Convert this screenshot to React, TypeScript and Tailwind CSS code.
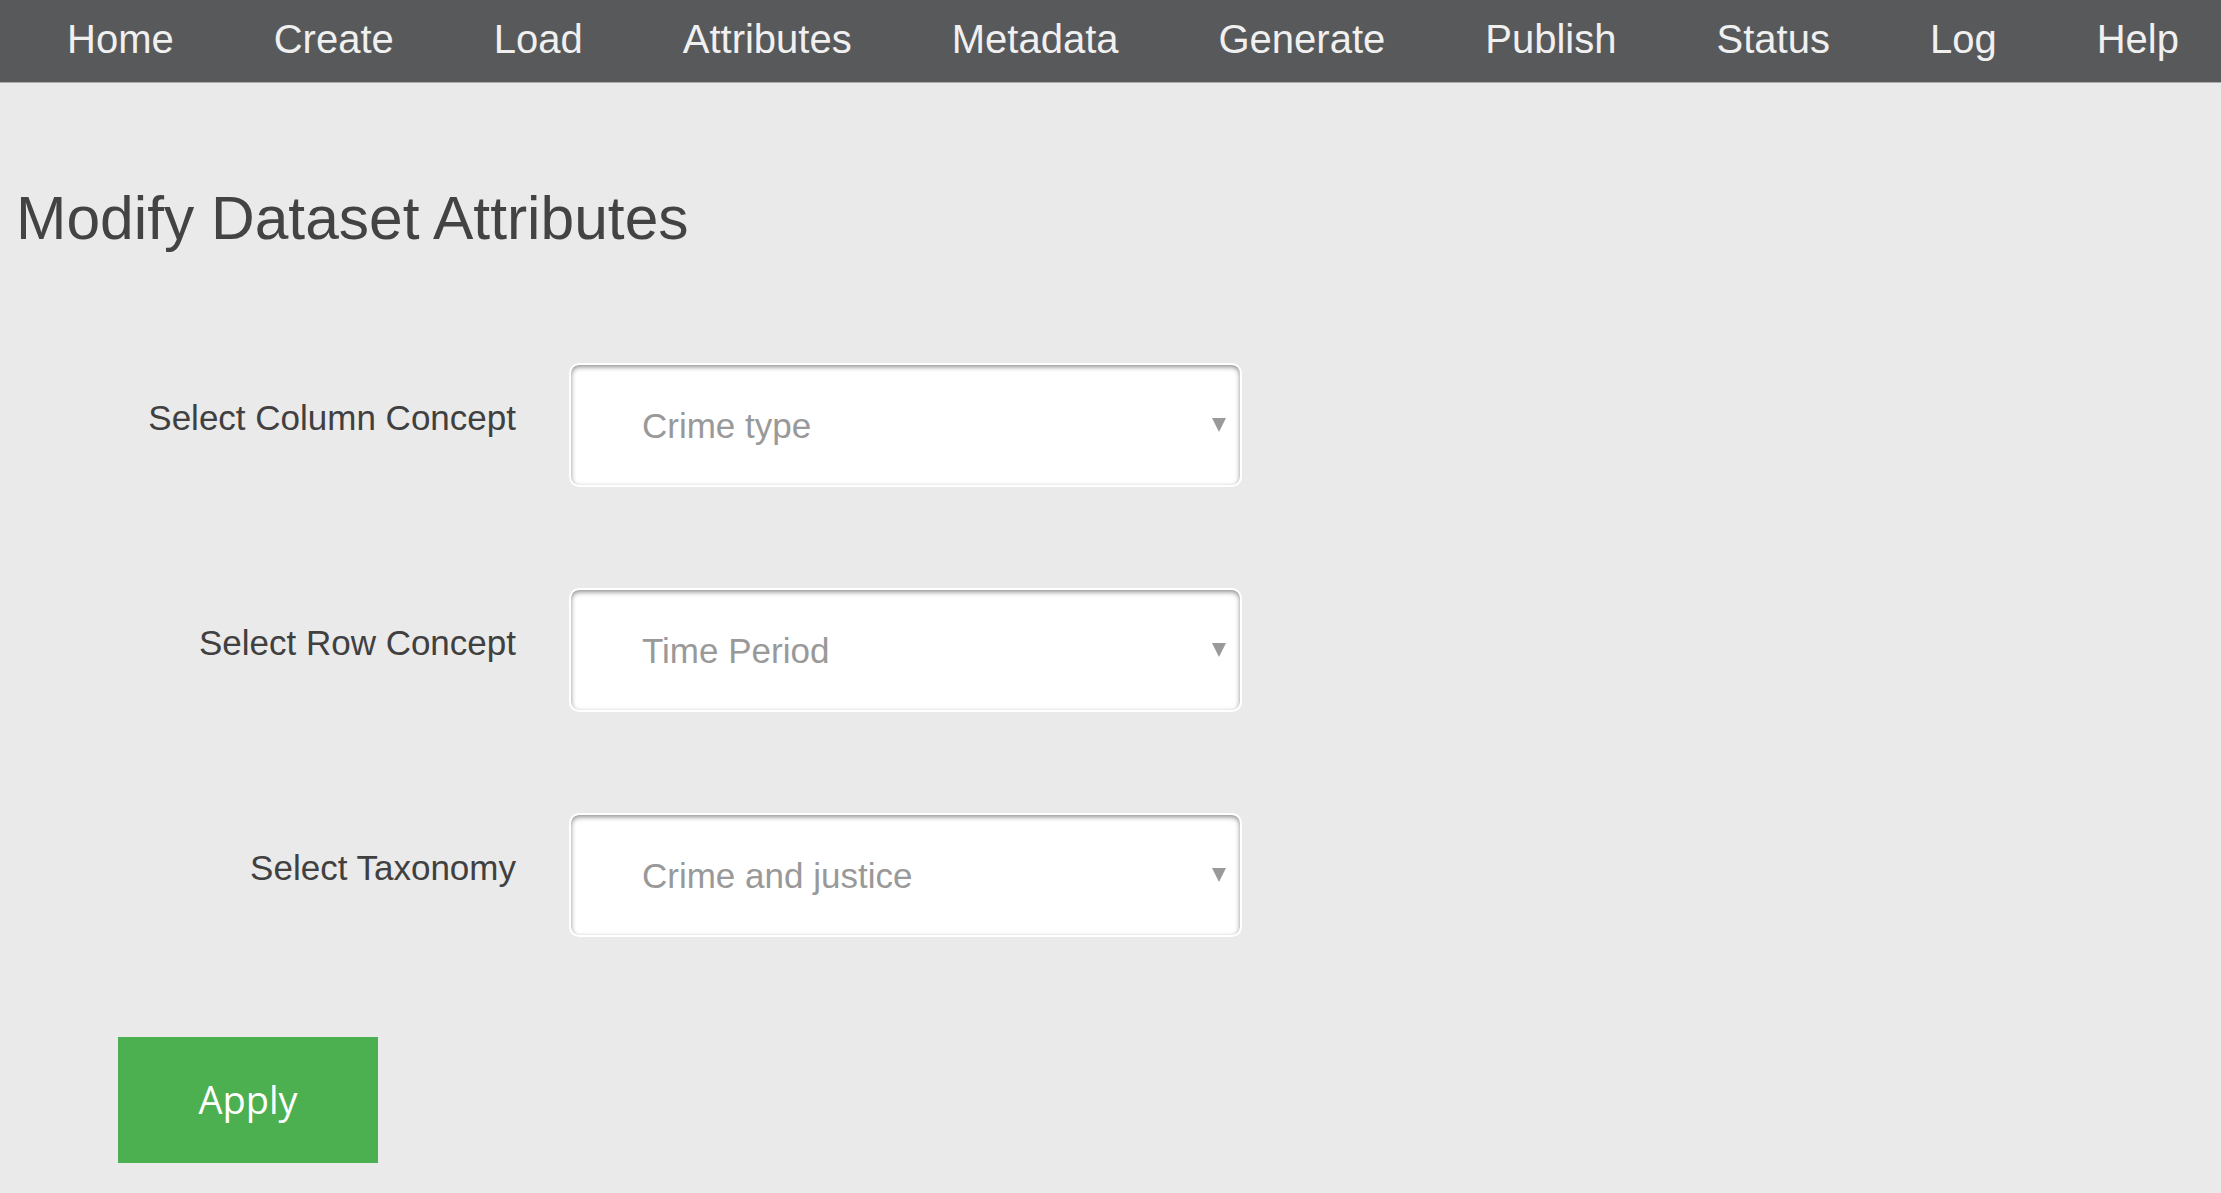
import React from "react";

const navItems = ["Home", "Create", "Load", "Attributes", "Metadata", "Generate", "Publish", "Status", "Log", "Help"];

const rows = [
  { label: "Select Column Concept", value: "Crime type" },
  { label: "Select Row Concept", value: "Time Period" },
  { label: "Select Taxonomy", value: "Crime and justice" },
];

function SelectBox({ value }: { value: string }) {
  return (
    <div className="relative flex h-[124px] w-[673px] items-center rounded-[10px] border-2 border-white bg-white shadow-[inset_0_2px_5px_rgba(0,0,0,0.45)]">
      <span className="pl-[71px] text-[35px] leading-[35px] text-[#999999]">{value}</span>
      <svg
        className="absolute right-[14px] top-1/2 -translate-y-1/2"
        width="14"
        height="14"
        viewBox="0 0 14 14"
      >
        <polygon points="0,0 14,0 7,14" fill="#9a9a9a" />
      </svg>
    </div>
  );
}

export default function App() {
  return (
    <div
      className="min-h-screen w-full bg-[#eaeaea]"
      style={{ fontFamily: '"Liberation Sans", Arial, sans-serif' }}
    >
      <nav className="flex h-[83px] items-start gap-[100px] border-b border-[#aeaeae] bg-[#58595b] pl-[67px] pt-[19px]">
        {navItems.map((item) => (
          <a key={item} className="text-[40px] leading-[40px] text-[#f0f0f0]">
            {item}
          </a>
        ))}
      </nav>

      <main className="pl-[16px]">
        <h1 className="mt-[102px] text-[60.5px] font-normal leading-[66px] text-[#434343]">
          Modify Dataset Attributes
        </h1>

        <div className="mt-[112px] grid grid-cols-[500px_673px] gap-x-[53px] gap-y-[101px]">
          {rows.map((r) => (
            <React.Fragment key={r.label}>
              <label className="pt-[38px] text-right text-[35px] leading-[34px] text-[#404040]">
                {r.label}
              </label>
              <SelectBox value={r.value} />
            </React.Fragment>
          ))}
        </div>

        <button
          className="ml-[102px] mt-[100px] flex h-[126px] w-[260px] items-center justify-center bg-[#4caf50] pb-[3px] text-[38px] leading-[40px] text-white"
          style={{ fontFamily: '"Open Sans", sans-serif' }}
        >
          Apply
        </button>
      </main>
    </div>
  );
}
